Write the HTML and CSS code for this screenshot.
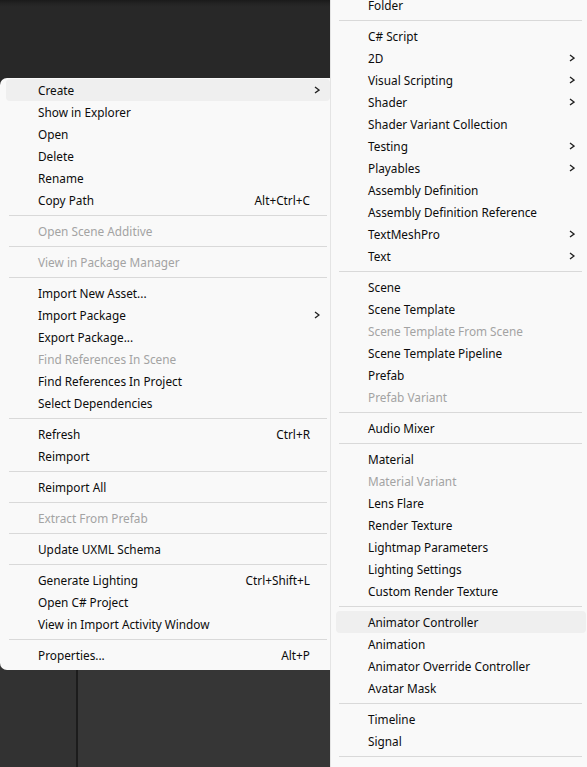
FILE: index.html
```html
<!DOCTYPE html>
<html>
<head>
<meta charset="utf-8">
<link rel="stylesheet" href="styles.css">
</head>
<body>
<div class="screen">
  <div class="left-col">
    <div class="top-area"></div>
    <div class="menu menu-left">
      <div class="item hover"><span class="label">Create</span><svg class="arrow" viewBox="0 0 6 8"><path d="M1 1 L5 4 L1 7"/></svg></div>
      <div class="item"><span class="label">Show in Explorer</span></div>
      <div class="item"><span class="label">Open</span></div>
      <div class="item"><span class="label">Delete</span></div>
      <div class="item"><span class="label">Rename</span></div>
      <div class="item"><span class="label">Copy Path</span><span class="shortcut">Alt+Ctrl+C</span></div>
      <div class="sep"></div>
      <div class="item disabled"><span class="label">Open Scene Additive</span></div>
      <div class="sep"></div>
      <div class="item disabled"><span class="label">View in Package Manager</span></div>
      <div class="sep"></div>
      <div class="item"><span class="label">Import New Asset...</span></div>
      <div class="item"><span class="label">Import Package</span><svg class="arrow" viewBox="0 0 6 8"><path d="M1 1 L5 4 L1 7"/></svg></div>
      <div class="item"><span class="label">Export Package...</span></div>
      <div class="item disabled"><span class="label">Find References In Scene</span></div>
      <div class="item"><span class="label">Find References In Project</span></div>
      <div class="item"><span class="label">Select Dependencies</span></div>
      <div class="sep"></div>
      <div class="item"><span class="label">Refresh</span><span class="shortcut">Ctrl+R</span></div>
      <div class="item"><span class="label">Reimport</span></div>
      <div class="sep"></div>
      <div class="item"><span class="label">Reimport All</span></div>
      <div class="sep"></div>
      <div class="item disabled"><span class="label">Extract From Prefab</span></div>
      <div class="sep"></div>
      <div class="item"><span class="label">Update UXML Schema</span></div>
      <div class="sep"></div>
      <div class="item"><span class="label">Generate Lighting</span><span class="shortcut">Ctrl+Shift+L</span></div>
      <div class="item"><span class="label">Open C# Project</span></div>
      <div class="item"><span class="label">View in Import Activity Window</span></div>
      <div class="sep"></div>
      <div class="item"><span class="label">Properties...</span><span class="shortcut">Alt+P</span></div>
    </div>
    <div class="bottom-area">
      <div class="pane-a"></div>
      <div class="pane-line"></div>
      <div class="pane-b"></div>
    </div>
  </div>
  <div class="menu menu-right">
    <div class="item"><span class="label">Folder</span></div>
    <div class="sep"></div>
    <div class="item"><span class="label">C# Script</span></div>
    <div class="item"><span class="label">2D</span><svg class="arrow" viewBox="0 0 6 8"><path d="M1 1 L5 4 L1 7"/></svg></div>
    <div class="item"><span class="label">Visual Scripting</span><svg class="arrow" viewBox="0 0 6 8"><path d="M1 1 L5 4 L1 7"/></svg></div>
    <div class="item"><span class="label">Shader</span><svg class="arrow" viewBox="0 0 6 8"><path d="M1 1 L5 4 L1 7"/></svg></div>
    <div class="item"><span class="label">Shader Variant Collection</span></div>
    <div class="item"><span class="label">Testing</span><svg class="arrow" viewBox="0 0 6 8"><path d="M1 1 L5 4 L1 7"/></svg></div>
    <div class="item"><span class="label">Playables</span><svg class="arrow" viewBox="0 0 6 8"><path d="M1 1 L5 4 L1 7"/></svg></div>
    <div class="item"><span class="label">Assembly Definition</span></div>
    <div class="item"><span class="label">Assembly Definition Reference</span></div>
    <div class="item"><span class="label">TextMeshPro</span><svg class="arrow" viewBox="0 0 6 8"><path d="M1 1 L5 4 L1 7"/></svg></div>
    <div class="item"><span class="label">Text</span><svg class="arrow" viewBox="0 0 6 8"><path d="M1 1 L5 4 L1 7"/></svg></div>
    <div class="sep"></div>
    <div class="item"><span class="label">Scene</span></div>
    <div class="item"><span class="label">Scene Template</span></div>
    <div class="item disabled"><span class="label">Scene Template From Scene</span></div>
    <div class="item"><span class="label">Scene Template Pipeline</span></div>
    <div class="item"><span class="label">Prefab</span></div>
    <div class="item disabled"><span class="label">Prefab Variant</span></div>
    <div class="sep"></div>
    <div class="item"><span class="label">Audio Mixer</span></div>
    <div class="sep"></div>
    <div class="item"><span class="label">Material</span></div>
    <div class="item disabled"><span class="label">Material Variant</span></div>
    <div class="item"><span class="label">Lens Flare</span></div>
    <div class="item"><span class="label">Render Texture</span></div>
    <div class="item"><span class="label">Lightmap Parameters</span></div>
    <div class="item"><span class="label">Lighting Settings</span></div>
    <div class="item"><span class="label">Custom Render Texture</span></div>
    <div class="sep"></div>
    <div class="item hover"><span class="label">Animator Controller</span></div>
    <div class="item"><span class="label">Animation</span></div>
    <div class="item"><span class="label">Animator Override Controller</span></div>
    <div class="item"><span class="label">Avatar Mask</span></div>
    <div class="sep"></div>
    <div class="item"><span class="label">Timeline</span></div>
    <div class="item"><span class="label">Signal</span></div>
    <div class="sep"></div>
  </div>
</div>
</body>
</html>
```
FILE: styles.css
```css
html, body {
  margin: 0;
  padding: 0;
}
body {
  width: 587px;
  height: 767px;
  overflow: hidden;
  background: #282828;
  font-family: "Noto Sans", "Open Sans", sans-serif;
  font-size: 11.8px;
  color: #0c0c0c;
}
.screen {
  display: flex;
  width: 587px;
  height: 767px;
  overflow: hidden;
}
.left-col {
  width: 330px;
  flex: none;
  display: flex;
  flex-direction: column;
  background: linear-gradient(to bottom, #282828 0, #282828 400px, #323232 400px);
}
.top-area {
  height: 78px;
  flex: none;
  background: linear-gradient(to bottom, #1a1a1a 0, #222222 3px, #272727 6px, #282828 8px);
}
.menu {
  background: #f9f9f9;
  box-sizing: border-box;
}
.menu-left {
  flex: none;
  padding: 1px 0 4px 6px;
  border-radius: 7px 0 0 7px;
}
.bottom-area {
  flex: 1;
  display: flex;
}
.pane-a {
  width: 76px;
  background: #323232;
}
.pane-line {
  width: 2px;
  background: #1c1c1c;
}
.pane-b {
  flex: 1;
  background: #363636;
}
.item {
  height: 22px;
  display: flex;
  align-items: center;
  padding: 0 10px 0 32px;
  border-radius: 4px;
  white-space: nowrap;
}
.item.hover {
  background: #efefef;
}
.item.disabled {
  color: #a3a3a3;
}
.label {
  flex: 1;
}
.shortcut {
  margin-right: 10px;
}
.arrow {
  width: 6px;
  height: 8px;
  flex: none;
}
.arrow path {
  fill: none;
  stroke: #222222;
  stroke-width: 1.4;
}
.sep {
  height: 1px;
  margin: 4px 3px 4px 3px;
  background: #d9d9d9;
}
.menu-right {
  width: 257px;
  flex: none;
  margin-top: -6px;
  height: 790px;
  border-left: 1px solid #e4e4e4;
  padding: 0 1px 0 5px;
}
.menu-right .item {
  padding-right: 11px;
}
.menu-right .sep {
  margin: 4px 4px 4px 3px;
}
```
